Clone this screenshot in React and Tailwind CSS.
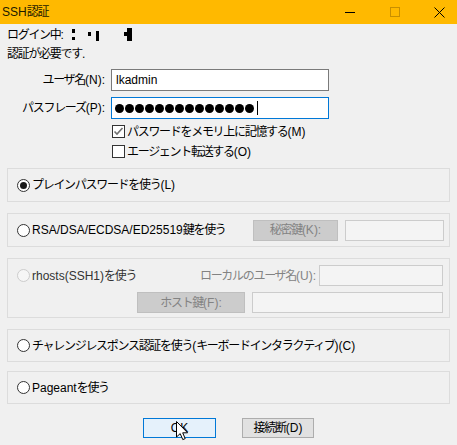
const font = "font-['Liberation_Sans','Noto_Sans_CJK_JP',sans-serif]";

// CJK runs are set a little tighter than Latin ones
function J({ children }) {
  const parts = String(children).split(/([\u3000-\u9fff\uff00-\uffef]+)/);
  return parts.map((p, i) =>
    i % 2 === 1 ? (
      <span key={i} className="tracking-[-1.3px]">
        {p}
      </span>
    ) : (
      p
    )
  );
}

function Radio({ checked, disabled }) {
  return (
    <span
      className={`w-[13px] h-[13px] rounded-full border flex items-center justify-center shrink-0 ${
        disabled ? 'border-[#cccccc] bg-[#f6f6f6]' : 'border-[#333333] bg-white'
      }`}
    >
      {checked && <span className="w-[7px] h-[7px] rounded-full bg-[#1a1a1a]" />}
    </span>
  );
}

function Checkbox({ checked }) {
  return (
    <span className="w-[13px] h-[13px] border border-[#333333] bg-white flex items-center justify-center shrink-0">
      {checked && (
        <svg width="11" height="11" viewBox="0 0 11 11">
          <polyline points="1.5,5.5 4,8 9.5,2" fill="none" stroke="#707070" strokeWidth="1.6" />
        </svg>
      )}
    </span>
  );
}

function Group({ className = '', children }) {
  return <div className={`border border-[#dcdcdc] ${className}`}>{children}</div>;
}

export default function App() {
  return (
    <div className={`w-[457px] h-[445px] bg-[#f0f0f0] relative overflow-hidden text-[12px] leading-none text-black ${font}`}>
      {/* title bar */}
      <div className="h-[24px] bg-[#ffb900] flex items-center">
        <span className="pl-[2px] text-[12px] text-[#1c1a00]">
          <J>SSH認証</J>
        </span>
        <div className="ml-auto mr-[-5px] flex h-full">
          <div className="w-[45px] flex items-center justify-center">
            <div className="w-[10px] h-[1px] bg-black" />
          </div>
          <div className="w-[45px] flex items-center justify-center">
            <div className="w-[10px] h-[10px] border border-[#c88f00]" />
          </div>
          <div className="w-[45px] flex items-center justify-center">
            <svg width="11" height="11" viewBox="0 0 11 11">
              <path d="M0.5 0.5L10.5 10.5M10.5 0.5L0.5 10.5" stroke="black" strokeWidth="1" />
            </svg>
          </div>
        </div>
      </div>

      <div className="px-[7px]">
        <div className="mt-[3px] h-[16px] flex items-center">
          <span className="w-[65px]">
            <J>ログイン中:</J>
          </span>
          <svg width="62" height="14" viewBox="0 0 62 14">
            <rect x="0" y="1" width="3" height="4" fill="black" />
            <rect x="0" y="9" width="3" height="3" fill="black" />
            <rect x="16" y="4" width="3" height="4" fill="black" />
            <rect x="24" y="3" width="3" height="10" fill="black" />
            <rect x="52" y="4" width="3" height="4" fill="black" />
            <rect x="55" y="0" width="5" height="13" fill="black" />
          </svg>
        </div>
        <div className="mt-[3px] h-[16px] flex items-center">
          <J>認証が必要です.</J>
        </div>

        <div className="mt-[7px] h-[22px] flex items-center">
          <span className="w-[98px] text-right">
            <J>ユーザ名(N):</J>
          </span>
          <div className="ml-[6px] w-[218px] h-[22px] border border-[#7a7a7a] bg-white flex items-center px-[4px]">
            lkadmin
          </div>
        </div>
        <div className="mt-[6px] h-[22px] flex items-center">
          <span className="w-[98px] text-right">
            <J>パスフレーズ(P):</J>
          </span>
          <div className="ml-[6px] w-[218px] h-[22px] border border-[#0078d7] bg-white flex items-center pl-[3px] gap-[1px]">
            {Array.from({ length: 14 }).map((_, i) => (
              <span key={i} className="w-[9px] h-[9px] rounded-full bg-black" />
            ))}
            <span className="ml-[2px] w-[1px] h-[14px] bg-black" />
          </div>
        </div>

        <div className="mt-[6px] h-[13px] flex items-center pl-[105px]">
          <Checkbox checked />
          <span className="ml-[2px]">
            <J>パスワードをメモリ上に記憶する(M)</J>
          </span>
        </div>
        <div className="mt-[7px] h-[13px] flex items-center pl-[105px]">
          <Checkbox />
          <span className="ml-[2px]">
            <J>エージェント転送する(O)</J>
          </span>
        </div>

        <Group className="mt-[10px] h-[34px] flex items-center pl-[9px]">
          <Radio checked />
          <span className="ml-[2px]">
            <J>プレインパスワードを使う(L)</J>
          </span>
        </Group>

        <Group className="mt-[11px] h-[34px] flex items-center pl-[9px] pr-[5px]">
          <Radio />
          <span className="ml-[2px] flex-1">
            <J>RSA/DSA/ECDSA/ED25519鍵を使う</J>
          </span>
          <div className="w-[85px] h-[21px] bg-[#cccccc] border border-[#bfbfbf] text-[#838383] flex items-center justify-center">
            <J>秘密鍵(K):</J>
          </div>
          <div className="ml-[7px] w-[99px] h-[21px] border border-[#cccccc] bg-[#f4f4f4]" />
        </Group>

        <Group className="mt-[11px] h-[60px] pl-[9px] pr-[6px] pt-[6px]">
          <div className="h-[21px] flex items-center">
            <Radio disabled />
            <span className="ml-[2px] flex-1 text-[#333333]">
              <J>rhosts(SSH1)を使う</J>
            </span>
            <span className="text-[#838383]">
              <J>ローカルのユーザ名(U):</J>
            </span>
            <div className="ml-[3px] w-[124px] h-[21px] border border-[#cccccc] bg-[#f4f4f4]" />
          </div>
          <div className="mt-[6px] h-[21px] flex items-center justify-end">
            <div className="w-[108px] h-[21px] bg-[#cccccc] border border-[#bfbfbf] text-[#838383] flex items-center justify-center">
              <J>ホスト鍵(F):</J>
            </div>
            <div className="ml-[7px] w-[191px] h-[21px] border border-[#cccccc] bg-[#f4f4f4]" />
          </div>
        </Group>

        <Group className="mt-[11px] h-[33px] flex items-center pl-[9px]">
          <Radio />
          <span className="ml-[2px]">
            <J>チャレンジレスポンス認証を使う(キーボードインタラクティブ)(C)</J>
          </span>
        </Group>

        <Group className="mt-[9px] h-[33px] flex items-center pl-[9px]">
          <Radio />
          <span className="ml-[2px]">
            <J>Pageantを使う</J>
          </span>
        </Group>

        <div className="mt-[14px] flex justify-center gap-[26px]">
          <div className="w-[73px] h-[20px] bg-[#e5f1fb] border border-[#0078d7] flex items-center justify-center">
            OK
          </div>
          <div className="w-[72px] h-[20px] bg-[#e1e1e1] border border-[#adadad] flex items-center justify-center">
            <J>接続断(D)</J>
          </div>
        </div>
      </div>

      {/* mouse pointer */}
      <svg className="absolute left-[176px] top-[421px]" width="14" height="20" viewBox="0 0 14 20">
        <path d="M0.5 0.5 L0.5 16 L4.2 12.6 L6.8 18.6 L9.2 17.6 L6.7 11.8 L11.6 11.8 Z" fill="white" stroke="black" strokeWidth="1" strokeLinejoin="miter" />
      </svg>
    </div>
  );
}
